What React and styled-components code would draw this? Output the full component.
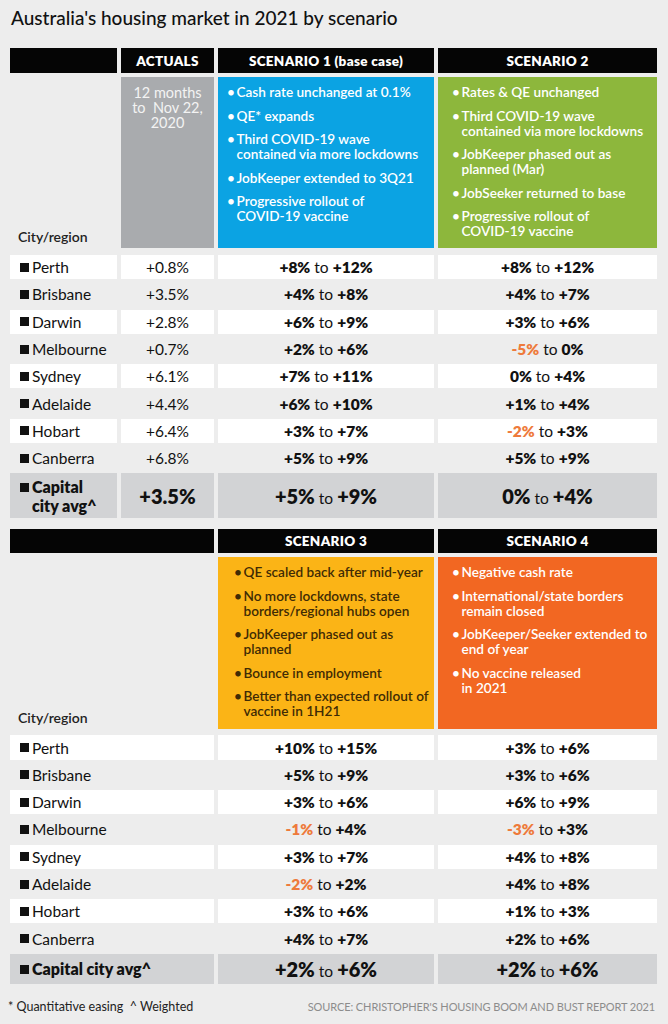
import styled, { createGlobalStyle } from "styled-components";

const GlobalStyle = createGlobalStyle`
    body {
        margin: 0;
        background: #ededed;
        font-family: Lato, "Open Sans", sans-serif;
        color: #111;
    }
`

const Page = styled.div`
    width: 668px;
    box-sizing: border-box;
    padding: 6px 11px 0 10px;
`

const Title = styled.h1`
    margin: 0 0 18px 1px;
    font-size: 19px;
    line-height: 24px;
    font-weight: 500;
    color: #111;
`

const Table = styled.section`
    display: flex;
    flex-direction: column;
    margin-bottom: ${p => p.$mb || 0}px;
`

const Grid = styled.div`
    display: grid;
    grid-template-columns: 107px 93px 216px 219px;
    column-gap: 4px;
    row-gap: ${p => p.$rowGap || 0}px;
    margin-top: ${p => p.$mt || 0}px;
`

const HeadCell = styled.div`
    grid-column: span ${p => p.$span || 1};
    height: ${p => p.$h}px;
    background: #050505;
    color: #fff;
    font-weight: 800;
    font-size: 13.5px;
    letter-spacing: 0.3px;
    display: flex;
    align-items: center;
    justify-content: center;
`

const Label = styled.div`
    grid-column: span ${p => p.$span || 1};
    display: flex;
    align-items: flex-end;
    padding: 0 0 3px 8px;
    font-size: 14px;
    font-weight: 600;
    color: #222;
`

const ActualsBox = styled.div`
    background: #a9abae;
    color: #f3f3f3;
    text-align: center;
    font-size: 14.5px;
    line-height: 15px;
    padding-top: 8px;
`

const ScenarioBox = styled.ul`
    margin: 0;
    list-style: none;
    height: ${p => p.$h}px;
    box-sizing: border-box;
    padding: 8px 0 0 ${p => p.$pl}px;
    background: ${p => p.$bg};
    color: ${p => p.$fg || "#fff"};
    font-size: 13.6px;
    font-weight: 600;
    line-height: 15px;
    display: flex;
    flex-direction: column;
    gap: 8.5px;
`

const Item = styled.li`
    display: flex;
    white-space: nowrap;
    &::before {
        content: "•";
        width: 9.5px;
        flex: none;
    }
`

const Cell = styled.div`
    grid-column: span ${p => p.$span || 1};
    height: ${p => p.$h || 24.3}px;
    background: ${p => p.$bg || "transparent"};
    display: flex;
    align-items: center;
    justify-content: ${p => (p.$left ? "flex-start" : "center")};
    padding-left: ${p => (p.$left ? 10 : 0)}px;
    font-size: 15.5px;
`

const Square = styled.span`
    display: inline-block;
    width: 9px;
    height: 9px;
    background: #111;
    margin-right: 3px;
    flex: none;
`

const CapLabel = styled.div`
    display: flex;
    align-items: baseline;
    font-size: 16px;
    font-weight: 800;
    line-height: 19px;
    ${Square} {
        align-self: flex-start;
        margin-top: 6px;
    }
`

const Num = styled.b`
    font-weight: 800;
    color: ${p => (p.$neg ? "#ee7a3b" : "inherit")};
    font-size: ${p => (p.$big ? 20 : 15.5)}px;
`

const To = styled.span`
    margin: 0 4px;
    font-size: 15.5px;
`

const Footer = styled.footer`
    display: flex;
    justify-content: space-between;
    align-items: center;
    margin: 15px 0 0 -2px;
    font-size: 12.5px;
    line-height: 16px;
`

const Note = styled.span`
    color: #222;
`

const Source = styled.span`
    color: #8c8c8c;
    font-size: 11px;
    letter-spacing: -0.1px;
    margin-right: 2px;
`

const table1 = [
    ["Perth", "+0.8%", ["+8%", "+12%"], ["+8%", "+12%"]],
    ["Brisbane", "+3.5%", ["+4%", "+8%"], ["+4%", "+7%"]],
    ["Darwin", "+2.8%", ["+6%", "+9%"], ["+3%", "+6%"]],
    ["Melbourne", "+0.7%", ["+2%", "+6%"], ["-5%", "0%"]],
    ["Sydney", "+6.1%", ["+7%", "+11%"], ["0%", "+4%"]],
    ["Adelaide", "+4.4%", ["+6%", "+10%"], ["+1%", "+4%"]],
    ["Hobart", "+6.4%", ["+3%", "+7%"], ["-2%", "+3%"]],
    ["Canberra", "+6.8%", ["+5%", "+9%"], ["+5%", "+9%"]],
]

const table2 = [
    ["Perth", ["+10%", "+15%"], ["+3%", "+6%"]],
    ["Brisbane", ["+5%", "+9%"], ["+3%", "+6%"]],
    ["Darwin", ["+3%", "+6%"], ["+6%", "+9%"]],
    ["Melbourne", ["-1%", "+4%"], ["-3%", "+3%"]],
    ["Sydney", ["+3%", "+7%"], ["+4%", "+8%"]],
    ["Adelaide", ["-2%", "+2%"], ["+4%", "+8%"]],
    ["Hobart", ["+3%", "+6%"], ["+1%", "+3%"]],
    ["Canberra", ["+4%", "+7%"], ["+2%", "+6%"]],
]

const scenarios = {
    s1: ["Cash rate unchanged at 0.1%", "QE* expands", "Third COVID-19 wave|contained via more lockdowns", "JobKeeper extended to 3Q21", "Progressive rollout of|COVID-19 vaccine"],
    s2: ["Rates & QE unchanged", "Third COVID-19 wave|contained via more lockdowns", "JobKeeper phased out as|planned (Mar)", "JobSeeker returned to base", "Progressive rollout of|COVID-19 vaccine"],
    s3: ["QE scaled back after mid-year", "No more lockdowns, state|borders/regional hubs open", "JobKeeper phased out as|planned", "Bounce in employment", "Better than expected rollout of|vaccine in 1H21"],
    s4: ["Negative cash rate", "International/state borders|remain closed", "JobKeeper/Seeker extended to|end of year", "No vaccine released|in 2021"],
}

const Range = ({ r, big }) => (
    <span>
        <Num $big={big} $neg={r[0].startsWith("-")}>{r[0]}</Num>
        <To>to</To>
        <Num $big={big} $neg={r[1].startsWith("-")}>{r[1]}</Num>
    </span>
)

const Bullets = ({ items }) => items.map(t => {
    const lines = t.split("|")
    return (
        <Item key={t}>
            <span>{lines.map((l, i) => <span key={l}>{i > 0 && <br />}{l}</span>)}</span>
        </Item>
    )
})

const App = () => {
    return (
        <Page>
            <GlobalStyle />
            <Title>Australia's housing market in 2021 by scenario</Title>

            <Table $mb={11}>
                <Grid>
                    <HeadCell $h={25} />
                    <HeadCell $h={25}>ACTUALS</HeadCell>
                    <HeadCell $h={25}>SCENARIO 1 (base case)</HeadCell>
                    <HeadCell $h={25}>SCENARIO 2</HeadCell>
                </Grid>
                <Grid $mt={4}>
                    <Label>City/region</Label>
                    <ActualsBox>12 months<br />to&nbsp; Nov 22,<br />2020</ActualsBox>
                    <ScenarioBox $h={171} $pl={9} $bg="#0ba3e3"><Bullets items={scenarios.s1} /></ScenarioBox>
                    <ScenarioBox $h={171} $pl={14} $bg="#8db73c"><Bullets items={scenarios.s2} /></ScenarioBox>
                </Grid>
                <Grid $mt={7} $rowGap={3}>
                    {table1.map(([city, actual, a, b], i) => {
                        const bg = i % 2 === 0 ? "#fff" : undefined
                        return [
                            <Cell key={city} $left $bg={bg}><Square />{city}</Cell>,
                            <Cell key={city + "a"} $bg={bg}>{actual}</Cell>,
                            <Cell key={city + "b"} $bg={bg}><Range r={a} /></Cell>,
                            <Cell key={city + "c"} $bg={bg}><Range r={b} /></Cell>,
                        ]
                    })}
                    <Cell $left $h={45} $bg="#d2d3d5"><CapLabel><Square /><span>Capital<br />city avg^</span></CapLabel></Cell>
                    <Cell $h={45} $bg="#d2d3d5"><Num $big>+3.5%</Num></Cell>
                    <Cell $h={45} $bg="#d2d3d5"><Range big r={["+5%", "+9%"]} /></Cell>
                    <Cell $h={45} $bg="#d2d3d5"><Range big r={["0%", "+4%"]} /></Cell>
                </Grid>
            </Table>

            <Table>
                <Grid>
                    <HeadCell $h={24} $span={2} />
                    <HeadCell $h={24}>SCENARIO 3</HeadCell>
                    <HeadCell $h={24}>SCENARIO 4</HeadCell>
                </Grid>
                <Grid $mt={4}>
                    <Label $span={2}>City/region</Label>
                    <ScenarioBox $h={172} $pl={16} $bg="#fbb416" $fg="#3f2b05"><Bullets items={scenarios.s3} /></ScenarioBox>
                    <ScenarioBox $h={172} $pl={14} $bg="#f26722"><Bullets items={scenarios.s4} /></ScenarioBox>
                </Grid>
                <Grid $mt={6} $rowGap={3}>
                    {table2.map(([city, a, b], i) => {
                        const bg = i % 2 === 0 ? "#fff" : undefined
                        return [
                            <Cell key={city} $span={2} $left $bg={bg}><Square />{city}</Cell>,
                            <Cell key={city + "b"} $bg={bg}><Range r={a} /></Cell>,
                            <Cell key={city + "c"} $bg={bg}><Range r={b} /></Cell>,
                        ]
                    })}
                    <Cell $span={2} $left $h={30} $bg="#d2d3d5"><CapLabel><Square />Capital city avg^</CapLabel></Cell>
                    <Cell $h={30} $bg="#d2d3d5"><Range big r={["+2%", "+6%"]} /></Cell>
                    <Cell $h={30} $bg="#d2d3d5"><Range big r={["+2%", "+6%"]} /></Cell>
                </Grid>
            </Table>

            <Footer>
                <Note>* Quantitative easing &nbsp;^ Weighted</Note>
                <Source>SOURCE: CHRISTOPHER'S HOUSING BOOM AND BUST REPORT 2021</Source>
            </Footer>
        </Page>
    )
}

export default App
